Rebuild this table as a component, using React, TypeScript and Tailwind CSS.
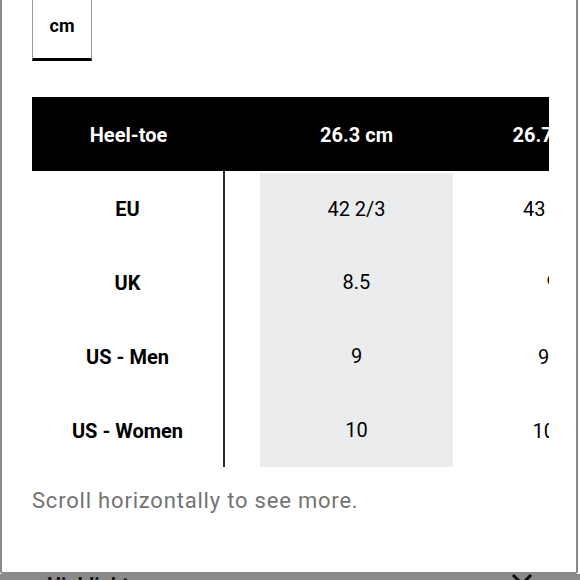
import React from "react";

const font = { fontFamily: "Roboto, 'Noto Sans', Arial, sans-serif" };

const rows = [
  { label: "EU", a: "42 2/3", b: "43 1/3" },
  { label: "UK", a: "8.5", b: "9" },
  { label: "US - Men", a: "9", b: "9.5" },
  { label: "US - Women", a: "10", b: "10.5" },
];

export default function App() {
  return (
    <div className="w-[580px] h-[580px] overflow-hidden bg-white flex flex-col" style={font}>
      <div className="w-[578px] h-[574px] shrink-0 bg-white border-l-2 border-r-2 border-b-2 border-[#8a8a8a] rounded-b-[3px] pl-[30px] flex flex-col">
        {/* unit toggle */}
        <div className="w-[60px] h-[61px] border-x border-[#9a9a9a] border-b-[3px] border-b-black flex items-center justify-center pb-[6px]">
          <span className="text-[18px] font-bold text-black leading-none">cm</span>
        </div>

        {/* table */}
        <div className="mt-[36px] w-[517px] overflow-hidden">
          <div className="w-[800px]">
            <div className="flex h-[74px] bg-black text-white text-[20px] font-bold items-center pt-[2px]">
              <div className="w-[193px] shrink-0 text-center">Heel-toe</div>
              <div className="w-[35px] shrink-0" />
              <div className="w-[193px] shrink-0 text-center">26.3 cm</div>
              <div className="w-[192px] shrink-0 text-center">26.7 cm</div>
            </div>
            <div className="flex">
              <div className="w-[193px] shrink-0 border-r-2 border-[#2a2a2a] flex flex-col">
                {rows.map((r) => (
                  <div key={r.label} className="h-[74px] pt-[2px] flex items-center justify-center text-[20px] font-bold text-black">
                    {r.label}
                  </div>
                ))}
              </div>
              <div className="w-[35px] shrink-0" />
              <div className="w-[193px] shrink-0 bg-[#ebecee] mt-[2px] flex flex-col">
                {rows.map((r, i) => (
                  <div key={r.label} className={`${i === 0 ? "h-[72px]" : "h-[74px]"} flex items-center justify-center text-[20px] text-black`}>
                    {r.a}
                  </div>
                ))}
              </div>
              <div className="w-[198px] shrink-0 flex flex-col">
                {rows.map((r) => (
                  <div key={r.label} className="h-[74px] pt-[2px] flex items-center justify-center text-[20px] text-black">
                    {r.b}
                  </div>
                ))}
              </div>
            </div>
          </div>
        </div>

        <div className="mt-[19px] text-[22px] tracking-[0.8px] leading-[30px] text-[#737373]">
          Scroll horizontally to see more.
        </div>
      </div>

      <div className="h-[6px] w-[580px] bg-[#8a8a8a] flex items-start overflow-hidden relative">
        <span className="ml-[47px] -mt-[1px] text-[20px] font-bold leading-[24px] text-[#111]">Highlights</span>
        <svg className="absolute left-[511px] top-[-1px]" width="22" height="14" viewBox="0 0 22 14">
          <path d="M2 2 L11 11 L20 2" fill="none" stroke="#111" strokeWidth="3" />
        </svg>
      </div>
    </div>
  );
}
